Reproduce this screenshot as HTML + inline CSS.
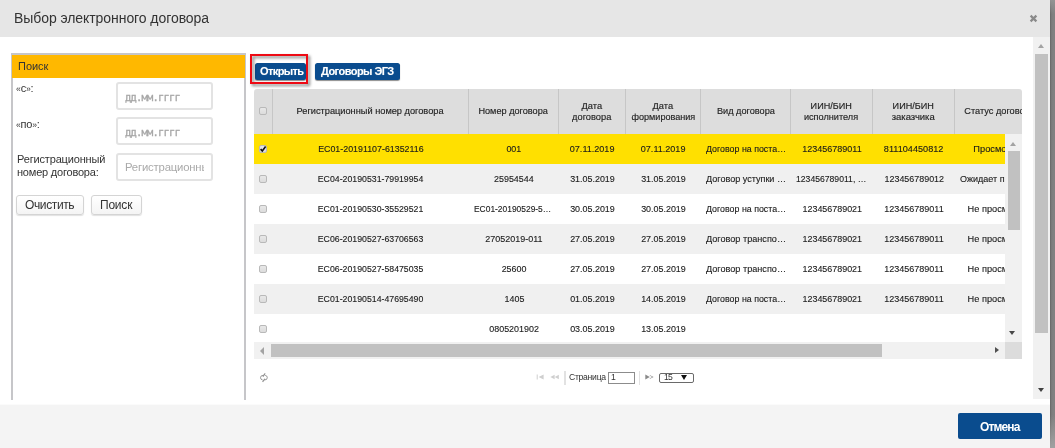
<!DOCTYPE html>
<html lang="ru">
<head>
<meta charset="utf-8">
<title>Выбор электронного договора</title>
<style>
*{box-sizing:border-box;margin:0;padding:0}
html,body{width:1055px;height:448px;overflow:hidden;background:#fff;font-family:"Liberation Sans",sans-serif;color:#333}
.tx{white-space:nowrap;display:inline-block;transform:scaleX(0.9999)}
#bk{position:absolute;left:1050px;top:0;width:5px;height:448px;background:linear-gradient(to right,#666 0,#7a7a7a 1.5px,#818181 3px)}
#bk2{position:absolute;left:1050px;top:0;width:5px;height:448px;background:linear-gradient(to bottom,rgba(150,150,150,.9) 0,rgba(128,128,128,0) 14px,rgba(128,128,128,0) 415px,rgba(165,165,165,.9) 448px)}
#hdr{position:absolute;left:0;top:0;width:1050px;height:37px;background:#e6e6e6}
#hdr .t{position:absolute;left:13.5px;top:9px;font-size:14px;line-height:18px;color:#333}
#hdr .x{position:absolute;left:1029px;top:14px;width:9px;height:9px}
#ftr{position:absolute;left:0;top:404px;width:1050px;height:44px;background:#f4f4f4;border-top:1px solid #fbfbfb}
#cancel{position:absolute;left:958px;top:8px;width:84px;height:26px;background:#0a4c8e;color:#fff;font-weight:bold;font-size:12px;line-height:28px;text-align:center;border-radius:2px}
#vsb{position:absolute;left:1033px;top:37px;width:17px;height:362px;background:#f1f1f1}
#vsb .th{position:absolute;left:2px;top:17px;width:13px;height:279px;background:#c1c1c1}
.arr{position:absolute;width:0;height:0;border-style:solid}
#left{position:absolute;left:11px;top:53px;width:235px;height:347px;border:solid #c6c6c9;border-width:2px 2px 0 2px}
#left .h{position:absolute;left:-1px;top:0;width:233px;height:23px;background:#ffb800}
.abs{position:absolute}
.gq{font-size:8.6px;position:relative;top:-0.3px}
.lbl{position:absolute;font-size:11px;line-height:13px;color:#333}
.inp{position:absolute;left:116px;width:97px;height:28px;border:2px solid #e3e3e3;border-radius:3px;background:#fff;overflow:hidden;white-space:nowrap}
.ph{position:absolute;left:7px;top:0;line-height:25px;color:#aaa}
.mono{font-family:"DejaVu Sans Mono","Liberation Mono",monospace;font-size:10.4px;color:#a6a6a6;-webkit-text-stroke:0.3px #a6a6a6;top:0.5px}
.btn{position:absolute;top:195px;height:20px;border:1px solid #d4d4d4;border-radius:3px;background:linear-gradient(#fff,#f4f4f4);font-size:12px;line-height:18px;text-align:center;color:#333;box-shadow:0 1px 1px rgba(0,0,0,.12)}
.bb{position:absolute;top:63px;height:16.5px;background:#0a4c8e;color:#fff;font-weight:bold;font-size:11px;line-height:16.5px;text-align:center;border-radius:2.5px;box-shadow:0 1px 1px rgba(0,0,0,.45);text-shadow:0 0 1px rgba(255,255,255,.4)}
#red{position:absolute;left:250px;top:54px;width:58px;height:29.5px;border:2px solid #ee0a14;filter:drop-shadow(2px 2px 1.5px rgba(0,0,0,.5))}
#grid{position:absolute;left:254px;top:89px;width:768px;height:270px;overflow:hidden}
#gh{position:absolute;left:0;top:0;width:768px;height:45px;background:#dddddd;border-radius:3px 3px 0 0;overflow:hidden}
.hc{position:absolute;top:0;height:45px;border-right:1px solid #c6c6c6;font-size:9.8px;line-height:11px;color:#222;-webkit-text-stroke:0.15px #222;display:flex;align-items:center;padding-bottom:2px;justify-content:center;text-align:center;white-space:nowrap}
#gb{position:absolute;left:0;top:45px;width:751px;height:208px;overflow:hidden}
.row{position:absolute;left:0;width:751px;height:30px}
.c{position:absolute;top:0;height:30px;font-size:9.4px;line-height:30.4px;color:#1a1a1a;-webkit-text-stroke:0.12px #1a1a1a;text-align:center;white-space:nowrap;overflow:hidden}
.c.l{text-align:left;padding-left:5px}
.cb{position:absolute;left:5px;width:8px;height:8px;border:1px solid #b9b9b9;border-radius:2px;background:linear-gradient(#e8e8e8,#dcdcdc)}
.pg{position:absolute;font-size:8.6px;line-height:10px;color:#333}
</style>
</head>
<body>
<div id="bk"></div><div id="bk2"></div>

<div id="hdr"><div class="t"><span id="t1" class="tx " style=";letter-spacing:-0.068px">Выбор электронного договора</span></div>
<svg class="x" viewBox="0 0 9 9"><path d="M1.6 1.6L7.4 7.4M7.4 1.6L1.6 7.4" stroke="#8a8a8a" stroke-width="2.2" fill="none"/></svg></div>
<div id="vsb"><div class="th"></div>
<div class="arr" style="left:5px;top:7px;border-width:0 3.5px 4px 3.5px;border-color:transparent transparent #a3a3a3 transparent"></div>
<div class="arr" style="left:5px;top:351px;border-width:4px 3.5px 0 3.5px;border-color:#404040 transparent transparent transparent"></div>
</div>
<div id="left"><div class="h"></div></div>
<div class="lbl" style="left:17.5px;top:59px;line-height:14px"><span id="t2" class="tx " style=";letter-spacing:-0.016px">Поиск</span></div>
<div class="lbl" style="left:16px;top:82px"><span id="t3" class="tx " style=";letter-spacing:-0.156px"><span class="gq">«</span>с<span class="gq">»</span>:</span></div>
<div class="inp" style="top:82px"><div class="ph mono"><span id="t4" class="tx " style=";letter-spacing:-0.756px">дд.мм.гггг</span></div></div>
<div class="lbl" style="left:16px;top:118px"><span id="t5" class="tx " style=";letter-spacing:-0.240px"><span class="gq">«</span>по<span class="gq">»</span>:</span></div>
<div class="inp" style="top:117px"><div class="ph mono"><span id="t6" class="tx " style=";letter-spacing:-0.756px">дд.мм.гггг</span></div></div>
<div class="lbl" style="left:16.5px;top:153px"><span id="t7" class="tx " style=";letter-spacing:-0.164px">Регистрационный</span><br><span id="t8" class="tx " style=";letter-spacing:-0.207px">номер договора:</span></div>
<div class="inp" style="top:153px"><div class="ph" style="font-size:11.3px;left:7.4px;width:78.5px;overflow:hidden;height:25px"><span id="t9" class="tx " style=";letter-spacing:-0.174px">Регистрационный</span></div></div>
<div class="btn" style="left:16px;width:68px"><span id="t10" class="tx " style=";letter-spacing:-0.381px">Очистить</span></div>
<div class="btn" style="left:91px;width:51px"><span id="t11" class="tx " style=";letter-spacing:-0.212px">Поиск</span></div>
<div class="bb" style="left:255px;width:51px;text-align:left;padding-left:5.2px"><span id="t12" class="tx " style=";letter-spacing:-0.602px">Открыть</span></div>
<div class="bb" style="left:315px;width:85px;text-align:left;padding-left:6px"><span id="t13" class="tx " style=";letter-spacing:-0.550px">Договоры ЭГЗ</span></div>
<div id="red"></div>
<div id="grid"><div id="gh">
<div class="hc" style="left:0px;width:19px"><div class="cb" style="top:18px"></div></div>
<div class="hc" style="left:19px;width:196px"><div><span id="t14" class="tx " style=";transform:scaleX(0.9420);transform-origin:50% 50%">Регистрационный номер договора</span></div></div>
<div class="hc" style="left:215px;width:90px"><div><span id="t15" class="tx " style=";transform:scaleX(0.9360);transform-origin:50% 50%">Номер договора</span></div></div>
<div class="hc" style="left:305px;width:67px"><div><span id="t16" class="tx " style=";transform:scaleX(0.9450);transform-origin:50% 50%">Дата</span><br><span id="t17" class="tx " style=";transform:scaleX(0.9460);transform-origin:50% 50%">договора</span></div></div>
<div class="hc" style="left:372px;width:75px"><div><span id="t18" class="tx " style=";transform:scaleX(0.9450);transform-origin:50% 50%">Дата</span><br><span id="t19" class="tx " style=";transform:scaleX(0.9270);transform-origin:50% 50%">формирования</span></div></div>
<div class="hc" style="left:447px;width:90px"><div><span id="t20" class="tx " style=";transform:scaleX(0.9380);transform-origin:50% 50%">Вид договора</span></div></div>
<div class="hc" style="left:537px;width:82px"><div><span id="t21" class="tx " style=";transform:scaleX(0.9270);transform-origin:50% 50%">ИИН/БИН</span><br><span id="t22" class="tx " style=";transform:scaleX(0.9340);transform-origin:50% 50%">исполнителя</span></div></div>
<div class="hc" style="left:619px;width:82px"><div><span id="t23" class="tx " style=";transform:scaleX(0.9270);transform-origin:50% 50%">ИИН/БИН</span><br><span id="t24" class="tx " style=";transform:scaleX(0.9670);transform-origin:50% 50%">заказчика</span></div></div>
<div class="hc" style="left:701px;width:90px"><div><span id="t25" class="tx " style=";transform:scaleX(0.9390);transform-origin:50% 50%">Статус договора</span></div></div>
</div><div id="gb">
<div class="row" style="top:0px;background:#ffe000">
<div class="cb" style="top:11px"><svg viewBox="0 0 8 8" width="8" height="8" style="position:absolute;left:-1px;top:-1px"><path d="M1.6 4.1L3.3 5.9L6.6 1.6" stroke="#111" stroke-width="1.6" fill="none"/></svg></div>
<div class="c" style="left:19px;width:196px"><span id="t26" class="tx " style=";transform:scaleX(0.9440);transform-origin:50% 50%">EC01-20191107-61352116</span></div>
<div class="c" style="left:215px;width:90px"><span id="t27" class="tx " style=";transform:scaleX(0.9510);transform-origin:50% 50%">001</span></div>
<div class="c" style="left:305px;width:67px"><span id="t28" class="tx " style=";transform:scaleX(0.9660);transform-origin:50% 50%">07.11.2019</span></div>
<div class="c" style="left:372px;width:75px"><span id="t29" class="tx " style=";transform:scaleX(0.9660);transform-origin:50% 50%">07.11.2019</span></div>
<div class="c l" style="left:447px;width:90px"><span id="t30" class="tx " style=";transform:scaleX(0.9440);transform-origin:0 50%">Договор на поста…</span></div>
<div class="c" style="left:537px;width:82px"><span id="t31" class="tx " style=";transform:scaleX(0.9620);transform-origin:50% 50%">123456789011</span></div>
<div class="c" style="left:619px;width:82px"><span id="t32" class="tx " style=";transform:scaleX(0.9730);transform-origin:50% 50%">811104450812</span></div>
<div class="c" style="left:701px;width:90px"><span id="t33" class="tx " style=";transform:scaleX(0.9870);transform-origin:50% 50%">Просмотрен</span></div>
</div>
<div class="row" style="top:30px;background:#f0f0f0">
<div class="cb" style="top:11px"></div>
<div class="c" style="left:19px;width:196px"><span id="t34" class="tx " style=";transform:scaleX(0.9330);transform-origin:50% 50%">EC04-20190531-79919954</span></div>
<div class="c" style="left:215px;width:90px"><span id="t35" class="tx " style=";transform:scaleX(0.9510);transform-origin:50% 50%">25954544</span></div>
<div class="c" style="left:305px;width:67px"><span id="t36" class="tx " style=";transform:scaleX(0.9520);transform-origin:50% 50%">31.05.2019</span></div>
<div class="c" style="left:372px;width:75px"><span id="t37" class="tx " style=";transform:scaleX(0.9520);transform-origin:50% 50%">31.05.2019</span></div>
<div class="c l" style="left:447px;width:90px"><span id="t38" class="tx " style=";transform:scaleX(0.9670);transform-origin:0 50%">Договор уступки …</span></div>
<div class="c l" style="left:537px;width:82px"><span id="t39" class="tx " style=";transform:scaleX(0.9200);transform-origin:0 50%">123456789011, …</span></div>
<div class="c" style="left:619px;width:82px"><span id="t40" class="tx " style=";transform:scaleX(0.9510);transform-origin:50% 50%">123456789012</span></div>
<div class="c l" style="left:701px;width:90px"><span id="t41" class="tx " style=";transform:scaleX(0.9600);transform-origin:0 50%">Ожидает п…</span></div>
</div>
<div class="row" style="top:60px;background:#fff">
<div class="cb" style="top:11px"></div>
<div class="c" style="left:19px;width:196px"><span id="t42" class="tx " style=";transform:scaleX(0.9330);transform-origin:50% 50%">EC01-20190530-35529521</span></div>
<div class="c l" style="left:215px;width:90px"><span id="t43" class="tx " style=";transform:scaleX(0.8980);transform-origin:0 50%">EC01-20190529-5…</span></div>
<div class="c" style="left:305px;width:67px"><span id="t44" class="tx " style=";transform:scaleX(0.9520);transform-origin:50% 50%">30.05.2019</span></div>
<div class="c" style="left:372px;width:75px"><span id="t45" class="tx " style=";transform:scaleX(0.9520);transform-origin:50% 50%">30.05.2019</span></div>
<div class="c l" style="left:447px;width:90px"><span id="t46" class="tx " style=";transform:scaleX(0.9440);transform-origin:0 50%">Договор на поста…</span></div>
<div class="c" style="left:537px;width:82px"><span id="t47" class="tx " style=";transform:scaleX(0.9510);transform-origin:50% 50%">123456789021</span></div>
<div class="c" style="left:619px;width:82px"><span id="t48" class="tx " style=";transform:scaleX(0.9620);transform-origin:50% 50%">123456789011</span></div>
<div class="c" style="left:701px;width:90px"><span id="t49" class="tx " style=";transform:scaleX(0.9830);transform-origin:50% 50%">Не просмотрен</span></div>
</div>
<div class="row" style="top:90px;background:#f0f0f0">
<div class="cb" style="top:11px"></div>
<div class="c" style="left:19px;width:196px"><span id="t50" class="tx " style=";transform:scaleX(0.9330);transform-origin:50% 50%">EC06-20190527-63706563</span></div>
<div class="c" style="left:215px;width:90px"><span id="t51" class="tx " style=";transform:scaleX(0.9560);transform-origin:50% 50%">27052019-011</span></div>
<div class="c" style="left:305px;width:67px"><span id="t52" class="tx " style=";transform:scaleX(0.9520);transform-origin:50% 50%">27.05.2019</span></div>
<div class="c" style="left:372px;width:75px"><span id="t53" class="tx " style=";transform:scaleX(0.9520);transform-origin:50% 50%">27.05.2019</span></div>
<div class="c l" style="left:447px;width:90px"><span id="t54" class="tx " style=";transform:scaleX(0.9730);transform-origin:0 50%">Договор транспо…</span></div>
<div class="c" style="left:537px;width:82px"><span id="t55" class="tx " style=";transform:scaleX(0.9510);transform-origin:50% 50%">123456789021</span></div>
<div class="c" style="left:619px;width:82px"><span id="t56" class="tx " style=";transform:scaleX(0.9620);transform-origin:50% 50%">123456789011</span></div>
<div class="c" style="left:701px;width:90px"><span id="t57" class="tx " style=";transform:scaleX(0.9830);transform-origin:50% 50%">Не просмотрен</span></div>
</div>
<div class="row" style="top:120px;background:#fff">
<div class="cb" style="top:11px"></div>
<div class="c" style="left:19px;width:196px"><span id="t58" class="tx " style=";transform:scaleX(0.9330);transform-origin:50% 50%">EC06-20190527-58475035</span></div>
<div class="c" style="left:215px;width:90px"><span id="t59" class="tx " style=";transform:scaleX(0.9510);transform-origin:50% 50%">25600</span></div>
<div class="c" style="left:305px;width:67px"><span id="t60" class="tx " style=";transform:scaleX(0.9520);transform-origin:50% 50%">27.05.2019</span></div>
<div class="c" style="left:372px;width:75px"><span id="t61" class="tx " style=";transform:scaleX(0.9520);transform-origin:50% 50%">27.05.2019</span></div>
<div class="c l" style="left:447px;width:90px"><span id="t62" class="tx " style=";transform:scaleX(0.9730);transform-origin:0 50%">Договор транспо…</span></div>
<div class="c" style="left:537px;width:82px"><span id="t63" class="tx " style=";transform:scaleX(0.9510);transform-origin:50% 50%">123456789021</span></div>
<div class="c" style="left:619px;width:82px"><span id="t64" class="tx " style=";transform:scaleX(0.9620);transform-origin:50% 50%">123456789011</span></div>
<div class="c" style="left:701px;width:90px"><span id="t65" class="tx " style=";transform:scaleX(0.9830);transform-origin:50% 50%">Не просмотрен</span></div>
</div>
<div class="row" style="top:150px;background:#f0f0f0">
<div class="cb" style="top:11px"></div>
<div class="c" style="left:19px;width:196px"><span id="t66" class="tx " style=";transform:scaleX(0.9330);transform-origin:50% 50%">EC01-20190514-47695490</span></div>
<div class="c" style="left:215px;width:90px"><span id="t67" class="tx " style=";transform:scaleX(0.9510);transform-origin:50% 50%">1405</span></div>
<div class="c" style="left:305px;width:67px"><span id="t68" class="tx " style=";transform:scaleX(0.9520);transform-origin:50% 50%">01.05.2019</span></div>
<div class="c" style="left:372px;width:75px"><span id="t69" class="tx " style=";transform:scaleX(0.9520);transform-origin:50% 50%">14.05.2019</span></div>
<div class="c l" style="left:447px;width:90px"><span id="t70" class="tx " style=";transform:scaleX(0.9440);transform-origin:0 50%">Договор на поста…</span></div>
<div class="c" style="left:537px;width:82px"><span id="t71" class="tx " style=";transform:scaleX(0.9510);transform-origin:50% 50%">123456789021</span></div>
<div class="c" style="left:619px;width:82px"><span id="t72" class="tx " style=";transform:scaleX(0.9620);transform-origin:50% 50%">123456789011</span></div>
<div class="c" style="left:701px;width:90px"><span id="t73" class="tx " style=";transform:scaleX(0.9830);transform-origin:50% 50%">Не просмотрен</span></div>
</div>
<div class="row" style="top:180px;background:#fff">
<div class="cb" style="top:11px"></div>
<div class="c" style="left:215px;width:90px"><span id="t74" class="tx " style=";transform:scaleX(0.9510);transform-origin:50% 50%">0805201902</span></div>
<div class="c" style="left:305px;width:67px"><span id="t75" class="tx " style=";transform:scaleX(0.9520);transform-origin:50% 50%">03.05.2019</span></div>
<div class="c" style="left:372px;width:75px"><span id="t76" class="tx " style=";transform:scaleX(0.9520);transform-origin:50% 50%">13.05.2019</span></div>
</div>
</div>
<div class="abs" style="left:751px;top:45px;width:17px;height:208px;background:#f1f1f1"></div>
<div class="abs" style="left:753.5px;top:62px;width:12px;height:79px;background:#c1c1c1"></div>
<div class="arr" style="left:755.5px;top:52.5px;border-width:0 3.5px 4px 3.5px;border-color:transparent transparent #a3a3a3 transparent"></div>
<div class="arr" style="left:755.2px;top:241.8px;border-width:4.4px 3.9px 0 3.9px;border-color:#484848 transparent transparent transparent"></div>
<div class="abs" style="left:0;top:253px;width:751px;height:17px;background:#f1f1f1"></div>
<div class="abs" style="left:751px;top:253px;width:17px;height:17px;background:#dcdcdc"></div>
<div class="abs" style="left:17px;top:255px;width:611px;height:13px;background:#c1c1c1"></div>
<div class="arr" style="left:5.6px;top:257.5px;border-width:4.1px 4.8px 4.1px 0;border-color:transparent #a3a3a3 transparent transparent"></div>
<div class="arr" style="left:741px;top:258px;border-width:3.5px 0 3.5px 4px;border-color:transparent transparent transparent #505050"></div>
</div>
<svg class="abs" style="left:258px;top:371px" width="12" height="13" viewBox="0 0 12 13"><g fill="none" stroke="#8c8c8c" stroke-width="0.9"><path d="M5.4 4.3Q2.5 4.3 2.5 6.6Q2.5 8.7 4.6 8.9"/><path d="M6.4 9Q9.3 9 9.3 6.7Q9.3 4.6 7.2 4.4"/><path d="M4.9 5.6L7.2 2.4" stroke-width="1.1"/><path d="M6.9 7.7L4.6 10.9" stroke-width="1.1"/></g></svg>
<svg class="abs" style="left:536px;top:373px" width="24" height="8" viewBox="0 0 24 8"><g fill="#cfcfcf"><rect x="0.7" y="1.5" width="1" height="5"/><path d="M7.6 1.5L7.6 6.5L2.6 4Z"/><path d="M18.6 1.8L18.6 6.2L14.4 4Z"/><path d="M22.8 1.8L22.8 6.2L18.8 4Z"/></g></svg>
<div class="abs" style="left:564px;top:371px;width:1.5px;height:14px;background:#e2e2e2"></div>
<div class="pg" style="left:568.5px;top:371.6px"><span id="t77" class="tx " style=";letter-spacing:-0.269px">Страница</span></div>
<div class="abs" style="left:608px;top:372px;width:27px;height:12px;border:1px solid #8c8c8c;background:#fff"></div>
<div class="pg" style="left:610.5px;top:371.6px"><span id="t78" class="tx " style="">1</span></div>
<div class="abs" style="left:638.5px;top:371px;width:1.5px;height:14px;background:#e2e2e2"></div>
<svg class="abs" style="left:645px;top:373px" width="10" height="8" viewBox="0 0 10 8"><g fill="#8a8a8a"><path d="M0.3 1.6L0.3 6.4L4.8 4Z"/><path d="M4.6 2L8.6 4L4.6 6L5 5.2L7.2 4L5 2.8Z"/></g></svg>
<div class="abs" style="left:659px;top:373px;width:35px;height:9.5px;border:1px solid #6a6a6a;border-radius:2px;background:#fff"></div>
<div class="pg" style="left:664px;top:371.6px"><span id="t79" class="tx " style=";letter-spacing:-0.781px">15</span></div>
<div class="arr" style="left:681px;top:375px;border-width:5.6px 3.8px 0 3.8px;border-color:#111 transparent transparent transparent"></div>
<div id="ftr"><div id="cancel"><span id="t80" class="tx " style=";letter-spacing:-0.847px">Отмена</span></div></div>
</body></html>
